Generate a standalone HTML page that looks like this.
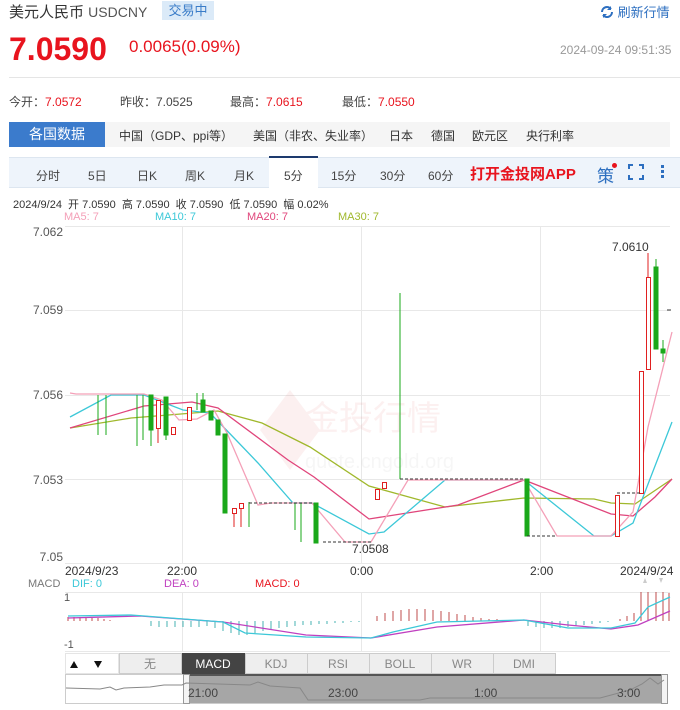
<!DOCTYPE html>
<html><head><meta charset="utf-8"><style>
*{margin:0;padding:0;box-sizing:border-box}
body{width:680px;height:710px;background:#fff;font-family:"Liberation Sans","Noto Sans CJK SC",sans-serif;color:#333;position:relative;overflow:hidden}
.a{position:absolute;white-space:nowrap}
</style></head><body>
<div class="a" style="left:9px;top:1px;font-size:15px;color:#333">美元人民币 <span style="font-size:14px;color:#555">USDCNY</span></div>
<div class="a" style="left:162px;top:1px;width:52px;height:19px;background:#dbeaf8;color:#3a7cc8;font-size:13px;line-height:19px;text-align:center">交易中</div>
<div class="a" style="left:600px;top:2px;font-size:13px;color:#2d6fc0"><svg width="14" height="14" viewBox="0 0 14 14" style="vertical-align:-2px"><path d="M2 7a5 5 0 0 1 9-3M12 7a5 5 0 0 1-9 3" fill="none" stroke="#2d6fc0" stroke-width="2"/><path d="M11 1v4H7z M3 13V9h4z" fill="#2d6fc0"/></svg> 刷新行情</div>
<div class="a" style="left:9px;top:31px;font-size:32px;font-weight:bold;color:#e8141e">7.0590</div>
<div class="a" style="left:129px;top:37px;font-size:17px;color:#e8141e">0.0065(0.09%)</div>
<div class="a" style="left:560px;top:43px;font-size:12px;color:#999">2024-09-24 09:51:35</div>
<div class="a" style="left:9px;top:77px;width:671px;height:1px;background:#e5e5e5"></div>
<div class="a" style="left:9px;top:93px;font-size:12px;color:#444">今开：<span style="color:#e8141e">7.0572</span></div>
<div class="a" style="left:120px;top:93px;font-size:12px;color:#444">昨收：7.0525</div>
<div class="a" style="left:230px;top:93px;font-size:12px;color:#444">最高：<span style="color:#e8141e">7.0615</span></div>
<div class="a" style="left:342px;top:93px;font-size:12px;color:#444">最低：<span style="color:#e8141e">7.0550</span></div>
<div class="a" style="left:9px;top:122px;width:661px;height:25px;background:#f5f5f5"></div>
<div class="a" style="left:9px;top:122px;width:96px;height:25px;background:#3b7bcc;color:#fff;font-size:14px;line-height:25px;text-align:center">各国数据</div>
<div class="a" style="left:119px;top:127px;font-size:12px;color:#333;word-spacing:0">中国（GDP、ppi等）</div>
<div class="a" style="left:253px;top:127px;font-size:12px;color:#333">美国（非农、失业率）</div>
<div class="a" style="left:389px;top:127px;font-size:12px;color:#333">日本</div>
<div class="a" style="left:431px;top:127px;font-size:12px;color:#333">德国</div>
<div class="a" style="left:472px;top:127px;font-size:12px;color:#333">欧元区</div>
<div class="a" style="left:526px;top:127px;font-size:12px;color:#333">央行利率</div>
<div class="a" style="left:9px;top:157px;width:671px;height:31px;background:#eef4fb;border-top:1px solid #dde6f0;border-bottom:1px solid #dde6f0"></div>
<div class="a" style="left:269px;top:156px;width:49px;height:33px;background:#fff;border-top:2px solid #1d3a6e"></div>
<div class="a" style="top:167px;left:0;font-size:12px;color:#444">
<span class="a" style="left:36px">分时</span><span class="a" style="left:88px">5日</span><span class="a" style="left:137px">日K</span><span class="a" style="left:185px">周K</span><span class="a" style="left:234px">月K</span><span class="a" style="left:284px">5分</span><span class="a" style="left:331px">15分</span><span class="a" style="left:380px">30分</span><span class="a" style="left:428px">60分</span></div>
<div class="a" style="left:470px;top:163px;font-size:15px;font-weight:bold;color:#e8141e">打开金投网APP</div>
<div class="a" style="left:597px;top:162px;font-size:17px;color:#2d6fc0">策</div>
<div class="a" style="left:612px;top:163px;width:5px;height:5px;border-radius:50%;background:#e8141e"></div>
<svg class="a" style="left:628px;top:164px" width="16" height="16"><path d="M1 5V1h4M11 1h4v4M15 11v4h-4M5 15H1v-4" fill="none" stroke="#2d6fc0" stroke-width="2"/></svg>
<div class="a" style="left:661px;top:165px;width:3px;height:3px;background:#2d6fc0;box-shadow:0 5px 0 #2d6fc0,0 10px 0 #2d6fc0"></div>
<div class="a" style="left:13px;top:196px;font-size:11px;color:#333">2024/9/24&nbsp; 开 7.0590&nbsp; 高 7.0590&nbsp; 收 7.0590&nbsp; 低 7.0590&nbsp; 幅 0.02%</div>
<div class="a" style="top:211px;font-size:11px;left:0"><span class="a" style="left:64px;color:#f4a0b8">MA5: 7</span><span class="a" style="left:155px;color:#3cc8d8">MA10: 7</span><span class="a" style="left:247px;color:#e0457b">MA20: 7</span><span class="a" style="left:338px;color:#a0b82c">MA30: 7</span></div>

<svg class="a" style="left:0;top:0" width="680" height="710" font-family="Liberation Sans,sans-serif">
<g stroke="#e8e8e8" stroke-width="1">
<line x1="65" y1="226.5" x2="670" y2="226.5"/><line x1="65" y1="310.5" x2="670" y2="310.5"/><line x1="65" y1="395.5" x2="670" y2="395.5"/><line x1="65" y1="479.5" x2="670" y2="479.5"/><line x1="65" y1="563.5" x2="670" y2="563.5"/>
<line x1="182.5" y1="226" x2="182.5" y2="563"/><line x1="361.5" y1="226" x2="361.5" y2="563"/><line x1="540.5" y1="226" x2="540.5" y2="563"/>
<line x1="65" y1="592.5" x2="670" y2="592.5"/><line x1="65" y1="651.5" x2="670" y2="651.5"/>
<line x1="182.5" y1="592" x2="182.5" y2="651"/><line x1="361.5" y1="592" x2="361.5" y2="651"/><line x1="540.5" y1="592" x2="540.5" y2="651"/>
</g>
<g font-size="12" fill="#555" text-anchor="end">
<text x="63" y="236">7.062</text><text x="63" y="314">7.059</text><text x="63" y="399">7.056</text><text x="63" y="484">7.053</text><text x="63" y="561">7.05</text></g>
<g opacity="0.08" fill="#e05050">
<path d="M260 430l30-40 30 40-30 40z"/>
<text x="305" y="430" font-size="34" font-family="Noto Sans CJK SC">金投行情</text>
<text x="305" y="468" font-size="20" fill="#999">quote.cngold.org</text></g>
<g stroke-width="1.3" fill="none">
<polyline stroke="#a0b82c" points="70,428 131,418 218,411 262,423 310,447 369,486 445,507 524,498 594,499 611,503 635,504 672,479"/>
<polyline stroke="#e0457b" points="70,428 144,406 192,402 218,408 288,460 314,477 369,519 458,505 524,480 611,514 633,516 655,497 672,479"/>
<polyline stroke="#3cc8d8" points="70,417 111,395 144,395 183,410 210,413 236,440 258,463 293,503 312,503 369,534 384,532 445,480 524,480 594,536 611,536 633,523 672,422"/>
<polyline stroke="#f4a0b8" points="70,393 76,394 144,394 162,400 179,420 197,419 214,410 227,433 258,505 271,503 312,503 345,542 371,542 408,480 524,480 557,536 611,536 633,512 648,427 672,332"/>
</g>
<g stroke="#1aa81a" stroke-width="1" fill="#1aa81a">
<line x1="98" y1="395" x2="98" y2="435"/><line x1="106" y1="395" x2="106" y2="435"/><line x1="137" y1="395" x2="137" y2="446"/><line x1="143" y1="395" x2="143" y2="440"/>
<line x1="151" y1="395" x2="151" y2="446"/><rect x="149" y="395" width="4" height="35"/>
<rect x="164" y="397" width="4" height="38"/><line x1="166" y1="397" x2="166" y2="440"/>
<line x1="197" y1="393" x2="197" y2="410"/><line x1="203" y1="393" x2="203" y2="412"/><rect x="201" y="400" width="4" height="12"/>
<rect x="209" y="411" width="4" height="9"/><rect x="216" y="420" width="4" height="15"/>
<rect x="223" y="434" width="4" height="79"/><line x1="249" y1="502" x2="249" y2="527"/>
<line x1="295" y1="503" x2="295" y2="530"/><line x1="301" y1="503" x2="301" y2="542"/><rect x="314" y="503" width="4" height="40"/>
<line x1="400" y1="293" x2="400" y2="479"/><rect x="525" y="479" width="4" height="57"/>
<line x1="656" y1="259" x2="656" y2="349"/><rect x="654" y="267" width="4" height="82"/>
<line x1="663" y1="340" x2="663" y2="362"/><rect x="661" y="349" width="4" height="4"/>
</g>
<g stroke="#e02020" stroke-width="1" fill="#fff">
<line x1="158" y1="400" x2="158" y2="443"/><rect x="156.5" y="400.5" width="4" height="28"/>
<rect x="171.5" y="427.5" width="4" height="7"/><rect x="187.5" y="407.5" width="4" height="13"/>
<line x1="234" y1="508" x2="234" y2="527"/><rect x="232.5" y="508.5" width="4" height="5"/>
<line x1="241" y1="503" x2="241" y2="527"/><rect x="239.5" y="503.5" width="4" height="5"/>
<rect x="375.5" y="489.5" width="4" height="10"/><rect x="382.5" y="482.5" width="4" height="6"/>
<rect x="615.5" y="495.5" width="4" height="41"/><rect x="639.5" y="371.5" width="4" height="122"/>
<line x1="648" y1="253" x2="648" y2="277"/><rect x="646.5" y="277.5" width="4" height="92"/>
</g>
<g stroke="#333" stroke-dasharray="3,2" stroke-width="1">
<line x1="249" y1="503" x2="312" y2="503"/><line x1="323" y1="542" x2="371" y2="542"/><line x1="400" y1="479" x2="524" y2="479"/><line x1="527" y1="536" x2="557" y2="536"/><line x1="617" y1="493" x2="640" y2="493"/></g>
<line x1="667" y1="310" x2="671" y2="310" stroke="#333"/>
<text x="352" y="553" font-size="12" fill="#333">7.0508</text>
<text x="612" y="251" font-size="12" fill="#333">7.0610</text>
<g font-size="12" fill="#333"><text x="65" y="575">2024/9/23</text><text x="167" y="575">22:00</text><text x="350" y="575">0:00</text><text x="530" y="575">2:00</text><text x="620" y="575">2024/9/24</text></g>
<g font-size="11"><text x="28" y="587" fill="#777">MACD</text><text x="72" y="587" fill="#3cc8d8">DIF: 0</text><text x="164" y="587" fill="#c040c0">DEA: 0</text><text x="255" y="587" fill="#e8141e">MACD: 0</text></g>
<text x="64" y="601" font-size="11" fill="#555">1</text><text x="64" y="648" font-size="11" fill="#555">-1</text>
<path d="M643 583l2-5 2 5zM659 578l2 5 2-5z" fill="#ccc"/>
<g stroke="#1aa0a0" stroke-width="0.8">
<path d="M151 621v5M159 621v6M167 621v6M175 621v6M183 621v6M191 621v6M199 621v6M207 621v5M215 621v7M223 621v10M231 621v12M239 621v14M247 621v14M255 621v12M263 621v10M271 621v9M279 621v7M287 621v6M295 621v5M303 621v4M311 621v4M319 621v3M327 621v3M335 621v2M343 621v2M351 621v1M359 621v1"/>
<path d="M528 621v5M536 621v6M544 621v7M552 621v7M560 621v7M568 621v6M576 621v5M584 621v4M592 621v3M600 621v2M608 621v1"/>
</g>
<g stroke="#b02020" stroke-width="0.8">
<path d="M68 621v-4M74 621v-4M80 621v-4M86 621v-3M92 621v-3M98 621v-3M104 621v-2M110 621v-1"/>
<path d="M377 621v-5M385 621v-8M393 621v-10M401 621v-11M409 621v-12M417 621v-12M425 621v-12M433 621v-11M441 621v-10M449 621v-9M457 621v-7M465 621v-6M473 621v-4M481 621v-3M489 621v-2M497 621v-2M505 621v-1M513 621v-1"/>
<path d="M620 621v-2M627 621v-5M634 621v-8M641 621v-29M648 621v-29M656 621v-29M663 621v-29M669 621v-28"/>
</g>
<g fill="none" stroke-width="1.3">
<polyline stroke="#c040c0" points="68,618 140,616 223,622 306,635 371,638 437,627 524,620 568,625 611,629 638,625 670,611"/>
<polyline stroke="#3cc8d8" points="68,616 131,615 223,622 245,633 306,637 371,638 393,632 437,622 524,620 568,628 611,628 635,623 648,607 670,597"/>
</g>
<rect x="65.5" y="653.5" width="53" height="20" fill="#fff" stroke="#e5e5e5"/>
<path d="M70 668l4-7 4 7zM94 661l4 7 4-7z" fill="#111"/>
<g stroke="#ccc" fill="#eee"><rect x="119.5" y="653.5" width="62" height="20"/><rect x="245.5" y="653.5" width="62" height="20"/><rect x="307.5" y="653.5" width="62" height="20"/><rect x="369.5" y="653.5" width="62" height="20"/><rect x="431.5" y="653.5" width="62" height="20"/><rect x="493.5" y="653.5" width="62" height="20"/></g>
<rect x="182" y="653" width="63" height="21" fill="#444"/>
<g font-size="12" fill="#888" text-anchor="middle"><text x="150" y="668" font-family="Noto Sans CJK SC">无</text><text x="213" y="668" fill="#fff">MACD</text><text x="276" y="668">KDJ</text><text x="338" y="668">RSI</text><text x="400" y="668">BOLL</text><text x="462" y="668">WR</text><text x="524" y="668">DMI</text></g>
<rect x="65.5" y="674.5" width="601" height="29" fill="#fff" stroke="#ccc"/>
<rect x="186" y="675" width="481" height="28" fill="#a6a6a6"/>
<rect x="186" y="674" width="481" height="2" fill="#555"/>
<rect x="183.5" y="674.5" width="6" height="29" fill="#f4f4f4" stroke="#999"/>
<rect x="661.5" y="674.5" width="6" height="29" fill="#f4f4f4" stroke="#999"/>
<polyline fill="none" stroke="#888" points="66,688 100,689 110,687 116,690 124,688 150,687 164,685 182,685 186,683 250,685 258,682 270,686 300,688 308,700 420,700 430,698 600,698 630,690 642,684 650,678 658,684 664,680"/>
<g font-size="12" fill="#444"><text x="188" y="697">21:00</text><text x="328" y="697">23:00</text><text x="474" y="697">1:00</text><text x="617" y="697">3:00</text></g>
</svg>
</body></html>
